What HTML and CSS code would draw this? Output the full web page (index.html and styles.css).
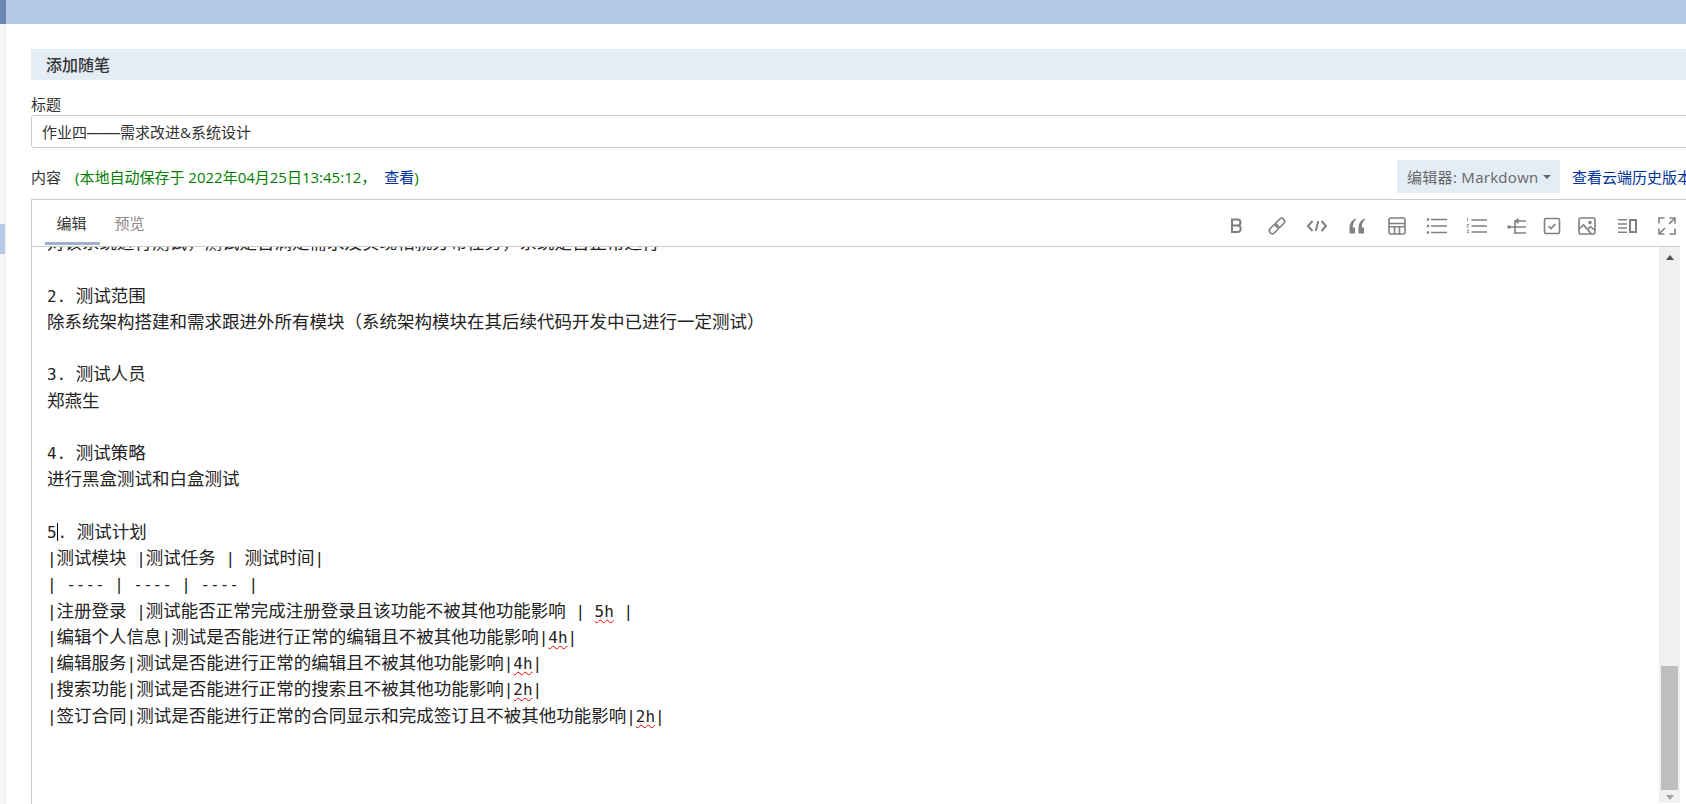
FILE: index.html
```html
<!DOCTYPE html>
<html lang="zh-CN">
<head>
<meta charset="utf-8">
<title>添加随笔</title>
<link rel="stylesheet" href="styles.css">
</head>
<body>
<div class="topbar"><div class="topbar-mark"></div></div>
<div class="page">
  <aside class="rail"><div class="rail-active"></div></aside>
  <main class="main">
    <h1 class="heading">添加随笔</h1>
    <div class="label">标题</div>
    <div class="title-input">作业四<span class="dash">——</span>需求改进&amp;系统设计</div>
    <div class="content-row">
      <div class="content-label">内容<span class="saved">(本地自动保存于 2022年04月25日13:45:12， <a class="view">查看</a>)</span></div>
      <div class="content-actions">
        <div class="editor-select">编辑器: Markdown<span class="caret"></span></div>
        <a class="history">查看云端历史版本</a>
      </div>
    </div>
    <section class="editor">
      <div class="editor-head">
        <div class="tabs"><span class="tab active">编辑</span><span class="tab">预览</span></div>
        <div class="tools">
          <span class="tool"><svg viewBox="0 0 18 18"><path class="s2" d="M4 2.500h5.500a3 3 0 0 1 0 6H4zM4 8.500h6a3.300 3.300 0 0 1 0 6.500H4z"/></svg></span>
          <span class="tool"><svg viewBox="0 0 18 18"><g transform="rotate(-45 9 9)"><rect class="s" x="-.5" y="6" width="10.500" height="6" rx="3"/><rect class="s" x="8" y="6" width="10.500" height="6" rx="3"/></g></svg></span>
          <span class="tool"><svg viewBox="0 0 18 18"><path class="s2" d="M4.500 4 0 9l4.500 5M13.500 4 18 9l-4.500 5"/><path class="s2" d="M10.300 4 7.700 14"/></svg></span>
          <span class="tool"><svg viewBox="0 0 18 18"><path class="f" d="M1.500 16.500V11C1.500 6.500 3.800 3 7.500 1.500L8 2.500C5.500 4.500 4.800 7.500 4.800 10.500H7V16.500zM10.500 16.500V11C10.500 6.500 12.800 3 16.500 1.500L17 2.500C14.500 4.500 13.800 7.500 13.800 10.500H16V16.500z"/></svg></span>
          <span class="tool"><svg viewBox="0 0 18 18"><rect class="s" x="1" y="1" width="16" height="16" rx="1.500"/><path class="s" d="M1 6.500h16M1 9.800h16M6.500 9.800V17M11.500 9.800V17"/></svg></span>
          <span class="tool"><svg viewBox="0 0 18 18"><path class="s" d="M3 2.500H19M3 9H19M3 15.500H19"/><path class="d" d="M-1 2.500h2.200M-1 9h2.200M-1 15.500h2.200"/></svg></span>
          <span class="tool"><svg viewBox="0 0 18 18"><path class="s" d="M3.500 3H19M3.500 9H19M3.500 15H19"/><path class="t" d="M-.5 .5V4M-1.200 7.500H.7L-1.200 10H.9M-1.200 13H.8L-.3 14.300 .8 15.500H-1.200"/></svg></span>
          <span class="tool"><svg viewBox="0 0 18 18"><circle class="f" cx="1" cy="10" r="1.800"/><path class="s" d="M1 10h6.500M7 4v13M7 4h11M7 10h11M7 16h11"/><path class="f" d="M10.500 1 6 4l4.500 3z"/></svg></span>
          <span class="tool tool-narrow"><svg viewBox="0 0 18 18"><rect class="s" x="1.500" y="1.500" width="15" height="15" rx="1.500"/><path class="s" d="m5.500 9 2.500 2.500 4.500-4.500"/></svg></span>
          <span class="tool"><svg viewBox="0 0 18 18"><rect class="s" x="1" y="1" width="16" height="16" rx="1.500"/><path class="s" d="m1 12 4.500-4 8 9M9.500 12.500l3-3 4.500 4"/><circle class="s" cx="12" cy="5.500" r="1"/></svg></span>
          <span class="tool"><svg viewBox="0 0 18 18"><path class="s" d="M0 2.800h9M0 7h9M0 11h9M0 15.200h9"/><rect class="s2" x="12" y="3" width="6" height="12"/></svg></span>
          <span class="tool"><svg viewBox="0 0 18 18"><path class="s" d="M1 6.500V1h5.500M11.500 1H17v5.500M1 11.500V17h5.500M11.500 17H17v-5.500"/><path class="s" d="M11 7l5-5M7 11l-5 5"/></svg></span>
        </div>
      </div>
      <div class="editor-body">
        <div class="code">
          <div class="line">对该系统进行测试，测试是否满足需求及实现相就分布任务，系统是否正常运行</div>
          <div class="line"></div>
          <div class="line"><span class="m">2. </span>测试范围</div>
          <div class="line">除系统架构搭建和需求跟进外所有模块（系统架构模块在其后续代码开发中已进行一定测试）</div>
          <div class="line"></div>
          <div class="line"><span class="m">3. </span>测试人员</div>
          <div class="line">郑燕生</div>
          <div class="line"></div>
          <div class="line"><span class="m">4. </span>测试策略</div>
          <div class="line">进行黑盒测试和白盒测试</div>
          <div class="line"></div>
          <div class="line"><span class="m">5<span class="cursor"></span>. </span>测试计划</div>
          <div class="line"><span class="m">|</span>测试模块<span class="m"> |</span>测试任务<span class="m"> | </span>测试时间<span class="m">|</span></div>
          <div class="line"><span class="m">| ---- | ---- | ---- |</span></div>
          <div class="line"><span class="m">|</span>注册登录<span class="m"> |</span>测试能否正常完成注册登录且该功能不被其他功能影响<span class="m"> | <span class="typo">5h</span> |</span></div>
          <div class="line"><span class="m">|</span>编辑个人信息<span class="m">|</span>测试是否能进行正常的编辑且不被其他功能影响<span class="m">|<span class="typo">4h</span>|</span></div>
          <div class="line"><span class="m">|</span>编辑服务<span class="m">|</span>测试是否能进行正常的编辑且不被其他功能影响<span class="m">|<span class="typo">4h</span>|</span></div>
          <div class="line"><span class="m">|</span>搜索功能<span class="m">|</span>测试是否能进行正常的搜索且不被其他功能影响<span class="m">|<span class="typo">2h</span>|</span></div>
          <div class="line"><span class="m">|</span>签订合同<span class="m">|</span>测试是否能进行正常的合同显示和完成签订且不被其他功能影响<span class="m">|<span class="typo">2h</span>|</span></div>
        </div>
        <div class="scrollbar">
          <span class="arrow-up"></span>
          <div class="thumb"></div>
          <span class="arrow-down"></span>
        </div>
      </div>
    </section>
  </main>
</div>
</body>
</html>
```
FILE: styles.css
```css
* { box-sizing: border-box; }
html, body { margin: 0; height: 804px; overflow: hidden; background: #fff; }
body { font-family: "Open Sans", "Noto Sans CJK SC", sans-serif; font-size: 15px; color: #333; }
.topbar { height: 24px; background: #b6c9e6; }
.topbar-mark { width: 6px; height: 24px; background: #6c87b3; }
.page { display: flex; height: 780px; }
.rail { flex: none; width: 6px; background: #f7f7f7; border-right: 1px solid #eee; padding-top: 200px; }
.rail-active { height: 30px; background: #b6c9e6; }
.main { flex: none; width: 1682px; padding: 25px 0 0 25px; }
.heading { margin: 0; height: 31px; padding-left: 15px; background: #e4ecf6; font-size: 16px; font-weight: 500; line-height: 32px; color: #333; }
.label { margin-top: 14px; height: 21px; line-height: 20px; }
.title-input { height: 33px; padding-left: 10px; border: 1px solid #ccc; border-radius: 3px; line-height: 32px; }
.dash { font-family: "Liberation Sans", sans-serif; font-size: 16.5px; }
.content-row { display: flex; align-items: center; height: 51px; padding-top: 6px; }
.content-label { flex: 1; }
.saved { margin-left: 14px; color: #008000; }
.view { margin-left: 4px; color: #039; }
.content-actions { display: flex; align-items: center; }
.editor-select { display: flex; align-items: center; height: 33px; width: 163px; padding-left: 10px; background: #e4ecf6; color: #666; letter-spacing: .3px; }
.caret { margin-left: 4px; border-style: solid; border-width: 4px 4px 0; border-color: #666 transparent transparent; }
.history { margin-left: 12px; width: 116px; white-space: nowrap; color: #039; }
.editor { height: 606px; border: 1px solid #ccc; border-bottom: 0; }
.editor-head { display: flex; justify-content: space-between; height: 46px; }
.tabs { display: flex; padding: 0 0 0 13px; }
.tab { width: 57px; height: 45px; padding-top: 13px; text-align: center; line-height: 20px; color: #888; }
.tab.active { color: #333; border-bottom: 3px solid #9fb0cc; width: 55px; margin-right: 1px; padding-right: 2px; }
.tools { display: flex; height: 46px; align-items: center; padding-top: 6px; }
.tool { display: flex; justify-content: center; width: 40px; }
.tool-narrow { width: 30px; }
.tool svg { width: 18px; height: 18px; display: block; overflow: visible; }
.s, .s2, .t, .d { fill: none; stroke: #808080; stroke-width: 1.6; }
.s2 { stroke-width: 2; }
.t { stroke-width: .8; }
.d { stroke-width: 2.400; }
.f { fill: #808080; stroke: none; }
.editor-body { display: flex; height: 557px; margin-right: 7px; border-top: 1px solid #ccc; overflow: hidden; }
.code { flex: 1; min-width: 0; padding-left: 15px; margin-top: -18px; font-family: "Noto Sans CJK SC", sans-serif; font-size: 17.5px; line-height: 26.25px; color: #222; }
.line { height: 26.25px; white-space: pre; }
.m { font-family: "DejaVu Sans Mono", monospace; font-size: 15.95px; }
.cursor { display: inline-block; width: 0; height: 18px; border-left: 1px solid #000; vertical-align: -3px; }
.typo { text-decoration: underline wavy #e00; text-decoration-thickness: 1px; text-underline-offset: 2px; }
.scrollbar { flex: none; display: flex; flex-direction: column; align-items: center; width: 21px; background: #f0f0f0; }
.arrow-up { margin-top: 8px; border-style: solid; border-width: 0 4.5px 5px; border-color: transparent transparent #505050; }
.thumb { width: 17px; height: 124px; margin-top: 406px; background: #bebebe; }
.arrow-down { margin-top: 5px; border-style: solid; border-width: 5px 4.5px 0; border-color: #a3a3a3 transparent transparent; }
```
